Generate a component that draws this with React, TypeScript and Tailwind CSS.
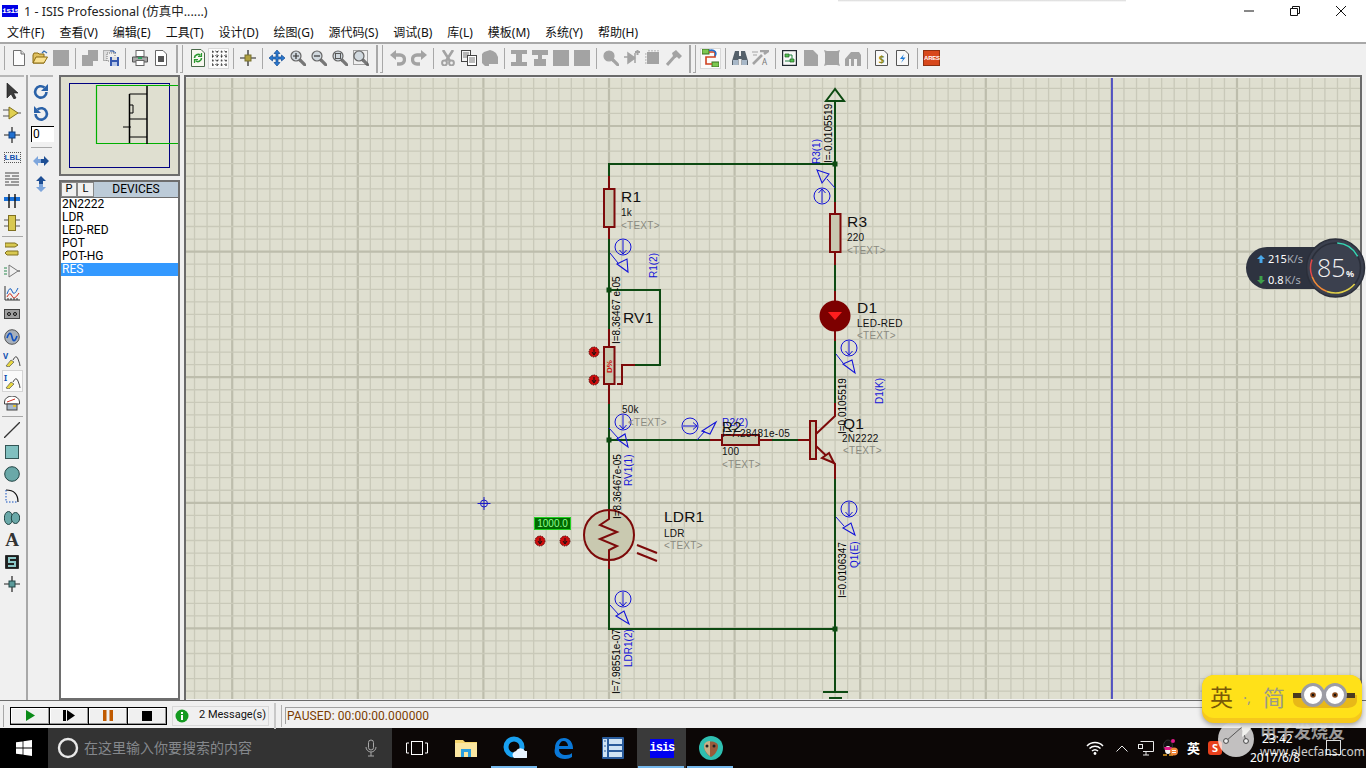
import React from "react";

type P = { children?: React.ReactNode; s?: number; w?: number; h?: number };
const Ic = ({ children, w = 16, h = 16 }: P) => (
  <svg width={w} height={h} viewBox={`0 0 ${w} ${h}`} className="block shrink-0">{children}</svg>
);
const G = "#a3a3a3";

const DocBase = ({ fill = "#fff", stroke = "#555" }: { fill?: string; stroke?: string }) => (
  <path d="M2.5 .5H10L13.5 4V15.5H2.5Z" fill={fill} stroke={stroke} />
);
const NewDoc = () => <Ic><DocBase fill="#fcfcfc" stroke="#707070" /><path d="M10 .5V4H13.5" fill="#ddd" stroke="#707070" /></Ic>;
const Folder = () => (
  <Ic>
    <path d="M1 5 2 3H6L7 4H12V13H1Z" fill="#e0c060" stroke="#8a6a10" />
    <path d="M1 13 4 7H15.5L12 13Z" fill="#f8e090" stroke="#8a6a10" />
    <path d="M10 3 12 1 15 3" fill="none" stroke="#3a70b0" strokeWidth="1.3" />
  </Ic>
);
const GSq = () => <Ic><rect x="0" y="0" width="16" height="16" fill={G} /></Ic>;
const GDocs = () => <Ic><path d="M6 0H16V11H11V16H0V5H6Z" fill={G} /></Ic>;
const SaveAll = () => (
  <Ic>
    <rect x=".5" y=".5" width="10" height="10" fill="#ddd" stroke="#777" strokeDasharray="1 1" />
    <rect x="4" y="3" width="8" height="8" fill="#eee" stroke="#777" strokeDasharray="1 1" />
    <path d="M7 1 10 1 13 3" fill="none" stroke="#2a5ab0" />
    <rect x="7" y="7" width="9" height="9" fill="#3558b0" />
    <rect x="9" y="7" width="5" height="3" fill="#ddd" />
    <rect x="9" y="12" width="5" height="4" fill="#b8c8e8" />
  </Ic>
);
const Printer = () => (
  <Ic>
    <rect x="4" y=".5" width="8" height="6" fill="#fff" stroke="#666" />
    <path d="M.5 7H15.5V12H.5Z" fill="#a8a8a8" stroke="#555" />
    <rect x="4" y="10.5" width="8" height="5" fill="#fff" stroke="#666" />
    <rect x="6" y="7" width="4" height="2" fill="#30a060" />
  </Ic>
);
const DocSq = () => (
  <Ic w={12} h={16}>
    <path d="M.5 .5H8L11.5 4V15.5H.5Z" fill="#fff" stroke="#666" />
    <rect x="3" y="6" width="6" height="6" fill="#555" />
  </Ic>
);
const Refresh = () => (
  <Ic w={14} h={18}>
    <path d="M.5 .5H10L13.5 4V17.5H.5Z" fill="#f8f8f0" stroke="#4a6a4a" />
    <path d="M3.5 9a3.5 3.5 0 0 1 6-2.5M10.5 9a3.5 3.5 0 0 1-6 2.5" fill="none" stroke="#2a9a30" strokeWidth="1.6" />
    <path d="M10.5 4v3.5H7M3.5 14v-3.5H7" fill="none" stroke="#2a9a30" strokeWidth="1.2" />
  </Ic>
);
const Dots = () => (
  <Ic w={16} h={16}>
    {[0, 1, 2, 3].map((i) => [0, 1, 2, 3].map((j) => <rect key={`${i}${j}`} x={1 + i * 4.4} y={1 + j * 4.4} width="1.6" height="1.6" fill="#333" />))}
    <path d="M1 1H15M1 5.5H15M1 10H15M1 14.5H15M1.5 1V15M6 1V15M10.5 1V15M15 1V15" stroke="#555" strokeWidth=".7" strokeDasharray="1 2" />
  </Ic>
);
const Cross = () => (
  <Ic>
    <path d="M8 0V16M0 8H16" stroke="#222" strokeWidth="1.2" />
    <rect x="5" y="5" width="6" height="6" fill="#b0a040" stroke="#777030" />
  </Ic>
);
const Move = () => (
  <Ic>
    <path d="M8 0 11 3.5H9V7H12.5V5L16 8 12.5 11V9H9V12.5H11L8 16 5 12.5H7V9H3.5V11L0 8 3.5 5V7H7V3.5H5Z" fill="#2a78d0" stroke="#124a90" strokeWidth=".7" />
  </Ic>
);
const Zoom = ({ kind = "" as string, grey = false }) => (
  <Ic>
    <path d="M10 10 15 15" stroke={grey ? G : "#777"} strokeWidth="3.2" strokeLinecap="round" />
    <circle cx="6" cy="6" r="5" fill={grey ? G : "#d0d8de"} stroke={grey ? G : "#666"} strokeWidth="1.2" />
    {kind === "+" && <path d="M3 6H9M6 3V9" stroke="#333" strokeWidth="1.2" />}
    {kind === "-" && <path d="M3 6H9" stroke="#333" strokeWidth="1.2" />}
    {kind === "f" && <rect x="3.5" y="3.5" width="5" height="5" fill="none" stroke="#555" />}
    {kind === "a" && <rect x=".5" y=".5" width="14" height="14" fill="none" stroke="#555" strokeDasharray="1 1" />}
  </Ic>
);
const Undo = ({ flip = false }) => (
  <Ic>
    <g transform={flip ? "translate(16 0) scale(-1 1)" : undefined}>
      <path d="M4 5H10A4 4 0 0 1 10 14H7" fill="none" stroke={G} strokeWidth="3.4" />
      <path d="M6 0V10L0 5Z" fill={G} />
    </g>
  </Ic>
);
const Scissors = () => (
  <Ic>
    <path d="M3 0 10 11M13 0 6 11" stroke={G} strokeWidth="2.6" />
    <circle cx="4.5" cy="13" r="2.4" fill="none" stroke={G} strokeWidth="2" />
    <circle cx="11.5" cy="13" r="2.4" fill="none" stroke={G} strokeWidth="2" />
  </Ic>
);
const Copy = () => (
  <Ic>
    <rect x=".5" y=".5" width="9" height="11" fill="#f4f4f4" stroke="#444" />
    <path d="M2 3H8M2 5H8M2 7H8" stroke="#777" />
    <rect x="6.5" y="5.5" width="9" height="10" fill="#fff" stroke="#444" />
    <path d="M8 8H14M8 10H14M8 12H14" stroke="#777" />
  </Ic>
);
const Paste = () => <Ic><path d="M5 1 8 0 11 1 14 3 16 7V14H7V16H3L0 13V4L2 2Z" fill={G} /></Ic>;
const AlignA = () => <Ic><path d="M0 0H16V4H11V12H16V16H0V12H5V4H0Z" fill={G} /></Ic>;
const AlignB = () => <Ic><path d="M0 0H16V5H10V9H14V16H2V9H6V5H0Z" fill={G} /></Ic>;
const Diode = () => <Ic><path d="M0 7H4M4 3 11 8 4 13ZM11 3V13" fill={G} stroke={G} strokeWidth="1.5" /><path d="M11 2H16M13.5 0V5" stroke={G} strokeWidth="2" /></Ic>;
const Chip = () => <Ic><rect x="2" y="2" width="12" height="12" fill={G} /><path d="M0 4H16M0 7H16M0 10H16M0 13H16M4 0V16M7 0V16M10 0V16M13 0V16" stroke={G} strokeDasharray="1.5 11" /></Ic>;
const Hammer = () => <Ic><path d="M1 15 9 6" stroke={G} strokeWidth="3" /><path d="M6 3 10 0 16 6 13 9 11 7 9 8 7 6Z" fill={G} /></Ic>;
const LinkIc = () => (
  <Ic w={17} h={18}>
    <rect x="0" y="0" width="7" height="5" fill="#7cc850" stroke="#3a7020" />
    <rect x="10" y="13" width="7" height="5" fill="#7cc850" stroke="#3a7020" />
    <path d="M7 3H13V8H4V15H10" fill="none" stroke="#d04020" strokeWidth="1.6" />
    <path d="M7 1.5C13 0 15 4 13 7" fill="none" stroke="#2070d0" strokeWidth="1.6" />
  </Ic>
);
const Binoc = () => (
  <Ic>
    <path d="M3 1H7V6H9V1H13L16 11V15H9.5V9H6.5V15H0V11Z" fill="#55606a" />
    <rect x="1" y="10" width="5" height="5" fill="#a8b8c8" />
    <rect x="10" y="10" width="5" height="5" fill="#a8b8c8" />
  </Ic>
);
const Tools = () => (
  <Ic w={17} h={16}>
    <path d="M1 14 10 5M8 1 16 1 12 4" stroke={G} strokeWidth="2.6" fill="none" />
    <path d="M0 2H6M1 5H5" stroke={G} strokeWidth="1.2" />
    <text x="10" y="15" fontSize="8" fill="#777">A</text>
  </Ic>
);
const DocGreen = () => (
  <Ic w={15} h={16}>
    <rect x=".5" y=".5" width="14" height="15" fill="#f8f8f8" stroke="#202830" strokeWidth="1.4" />
    <path d="M3 4H7V7H3ZM8 9H12V12H8Z" fill="#50c050" stroke="#206020" strokeWidth=".7" />
    <path d="M7 5H10V9M3 11H8" stroke="#208040" fill="none" />
  </Ic>
);
const GDoc = () => <Ic w={14} h={16}><path d="M0 0H9L14 5V16H0Z" fill={G} /></Ic>;
const GX = () => <Ic><path d="M0 0 3 1H13L16 0 15 3V13L16 16 13 15H3L0 16 1 13V3Z" fill={G} /></Ic>;
const GArc = () => <Ic><path d="M0 16V9L6 2H14L16 5V16H12V9H9V16H6V9H4V16Z" fill={G} /></Ic>;
const DocSym = ({ sym, color }: { sym: string; color: string }) => (
  <Ic w={13} h={16}>
    <path d="M.5 .5H9L12.5 4V15.5H.5Z" fill="#f8f8f8" stroke="#555" />
    <text x="6.5" y="12.5" textAnchor="middle" fontSize="10" fontWeight="700" fill={color}>{sym}</text>
  </Ic>
);
const Bolt = () => (
  <Ic w={13} h={16}>
    <path d="M.5 .5H9L12.5 4V15.5H.5Z" fill="#f8f8f8" stroke="#555" />
    <path d="M8 4 4 9H7L5 13 9.5 7.5H6.5Z" fill="#1878d8" />
  </Ic>
);
const Ares = () => (
  <div className="w-[17px] h-[16px] bg-[#d8481c] border border-[#903010] text-white text-[6px] leading-[14px] font-bold text-center whitespace-nowrap tracking-[-0.2px] font-['Liberation_Sans',sans-serif]">ARES</div>
);

const Cell = ({ children, on }: { children?: React.ReactNode; on?: boolean }) => (
  <div className={on ? "w-[21px] h-[21px] flex items-center justify-center bg-[#fbfbfb] border border-[#d8d8d8]" : "w-[21px] h-[21px] flex items-center justify-center"}>{children}</div>
);
const Sep = () => (
  <div className="w-[8px] h-[21px] flex justify-center"><div className="w-px h-full bg-[#a8a8a8]" /></div>
);
const Big = () => (
  <div className="w-[16px] h-[28px] flex pl-[5px] gap-[2px] translate-y-[1px]">
    <div className="w-[2px] h-full bg-[#a8a8a8]" />
    <div className="w-[3px] h-full border-r border-b border-[#a8a8a8]" />
  </div>
);

const LeftCell = ({ children, on }: { children?: React.ReactNode; on?: boolean }) => (
  <div className={on ? "w-[21px] h-[22px] flex items-center justify-center bg-[#fafafa] border border-[#d4d4d4]" : "w-[21px] h-[22px] flex items-center justify-center"}>{children}</div>
);

const Pen = () => (
  <g>
    <path d="M3 15 8 9 11 11 6 16Z" fill="#e8d840" stroke="#555" strokeWidth=".7" />
    <path d="M10 9Q13 3 15 8T17 15" fill="none" stroke="#333" strokeWidth=".9" />
  </g>
);

const leftTop = [
  <Ic key="a"><path d="M3 0V15L7 11 10 16 12 15 9.5 10H14Z" fill="#3c3c3c" stroke="#111" strokeWidth=".6" /></Ic>,
  <Ic key="b" w={18} h={14}><path d="M6 1 15 7 6 13Z" fill="#e0d050" stroke="#807020" /><path d="M0 4H6M0 10H6M15 7H18" stroke="#555" /></Ic>,
  <Ic key="c"><path d="M8 0V16M0 8H16" stroke="#222" strokeWidth="1.2" /><rect x="5" y="5" width="6" height="6" fill="#2070d0" stroke="#104080" /></Ic>,
  <div key="d" className="w-[17px] h-[11px] border border-dotted border-[#555] text-[#1050b0] text-[8px] leading-[9px] font-bold text-center font-['Liberation_Sans',sans-serif]">LBL</div>,
  <Ic key="e"><path d="M1 2H15M1 5H6M8 5H15M1 8H15M1 11H5M7 11H15M1 14H15" stroke="#444" /></Ic>,
  <Ic key="f" w={16} h={14}><path d="M0 5H16" stroke="#1870d8" strokeWidth="4" /><path d="M5 0V14M11 0V14" stroke="#111" strokeWidth="1.4" /></Ic>,
  <Ic key="g" w={16} h={16}><rect x="4.5" y=".5" width="7" height="15" fill="#d8c850" stroke="#807020" /><path d="M0 5H4M0 11H4M12 5H16M12 11H16" stroke="#555" /></Ic>,
];
const leftMid = [
  <Ic key="a" w={14} h={14}><path d="M0 1H10L13 3 10 5H0ZM2 9H13V13H2L0 11Z" fill="#d8c850" stroke="#807020" /></Ic>,
  <Ic key="b" w={16} h={14}><path d="M5 1V13L14 7Z" fill="#f0f0f0" stroke="#777" /><path d="M0 4H3M0 7H3M0 10H3" stroke="#2a8a50" /><path d="M14 7H16" stroke="#333" /></Ic>,
  <Ic key="c" w={16} h={16}><path d="M1 1V15H16" stroke="#333" fill="none" /><path d="M3 9Q6 0 8 6T14 3" fill="none" stroke="#1860c0" /><path d="M3 12Q6 6 8 11T15 8" fill="none" stroke="#d03020" /><path d="M4 15V13M7 15V13M10 15V13M13 15V13" stroke="#333" /></Ic>,
  <Ic key="d" w={16} h={12}><rect x=".5" y=".5" width="15" height="9" fill="#a0a0a0" stroke="#444" /><circle cx="5" cy="5" r="1.5" fill="none" stroke="#111" /><circle cx="11" cy="5" r="1.5" fill="none" stroke="#111" /></Ic>,
  <Ic key="e"><circle cx="8" cy="8" r="7.3" fill="#a8b0ba" stroke="#555" /><path d="M3 9C5 3 7 3 8 8S11 13 13 7" fill="none" stroke="#1050c0" strokeWidth="1.6" /></Ic>,
  <Ic key="f" w={18} h={16}><text x="0" y="8" fontSize="8" fontWeight="700" fill="#1050b0">V</text><Pen /></Ic>,
  <Ic key="g" w={18} h={16}><text x="1" y="8" fontSize="8" fontWeight="700" fill="#1050b0">I</text><Pen /></Ic>,
  <Ic key="h" w={16} h={15}><path d="M.5 6A7.5 6 0 0 1 15.5 6V8H.5Z" fill="#fff" stroke="#444" /><path d="M3 6 11 3" stroke="#d03020" /><rect x="3" y="8" width="10" height="6" fill="#a8b8c8" stroke="#444" /><rect x="9" y="9" width="3" height="2" fill="#e0c030" /></Ic>,
];
const Teal = "#6aa8a8";
const leftBot = [
  <Ic key="a"><path d="M0 16 16 0" stroke="#333" strokeWidth="1.3" /></Ic>,
  <Ic key="b" w={14} h={14}><rect x=".5" y=".5" width="13" height="13" fill="#80c0c0" stroke="#355" /></Ic>,
  <Ic key="c"><circle cx="8" cy="8" r="7.3" fill={Teal} stroke="#244" /></Ic>,
  <Ic key="d" w={14} h={14}><path d="M1 1Q13 1 13 13" fill="none" stroke="#111" strokeWidth="1.2" /><path d="M1 1V13H13" fill="none" stroke="#1050c0" strokeDasharray="1.5 1.5" /></Ic>,
  <Ic key="e" w={16} h={14}><ellipse cx="4.5" cy="7" rx="4.2" ry="6.5" fill={Teal} stroke="#244" /><ellipse cx="11.5" cy="7" rx="4.2" ry="5.5" fill={Teal} stroke="#244" /></Ic>,
  <div key="f" className="text-[19px] leading-[20px] font-bold font-['Liberation_Serif',serif] text-[#333]">A</div>,
  <Ic key="g" w={14} h={14}><rect x=".7" y=".7" width="12.6" height="12.6" fill="#222" stroke="#111" /><path d="M11 3H4V7H10V11H3" fill="none" stroke="#8cc8c8" strokeWidth="2" /></Ic>,
  <Ic key="h" w={16} h={16}><path d="M8 0V16M0 8H16" stroke="#222" strokeWidth="1.2" /><rect x="5" y="5" width="6" height="6" fill="#5a9a9a" stroke="#244" /></Ic>,
];

/* schematic helpers */
const GW = "#0d4a12";
const RW = "#7d0a0a";
const Body = "#c9c9b0";
const W = ({ d, c = GW, sw = 2 }: { d: string; c?: string; sw?: number }) => <path d={d} fill="none" stroke={c} strokeWidth={sw} />;
const J = ({ x, y }: { x: number; y: number }) => <rect x={x - 2.5} y={y - 2.5} width="5" height="5" fill={GW} />;
const VT = ({ x, y, c = "#000", t }: { x: number; y: number; c?: string; t: string }) => (
  <text transform={`translate(${x + 3.5} ${y}) rotate(-90)`} fontSize="10" fill={c}>{t}</text>
);
const T = ({ x, y, t, s = 10, c = "#111" }: { x: number; y: number; t: string; s?: number; c?: string }) => (
  <text x={x} y={y - 1} fontSize={s} fill={c} fontWeight={400} letterSpacing={s < 11 ? 0.25 : 0.2}>{t}</text>
);
const Tx = ({ x, y }: { x: number; y: number }) => <T x={x} y={y} t="<TEXT>" c="#8a8a80" />;
const BL = "#1414d8";
const Probe = ({ cx, cy, rot, line, tri }: { cx: number; cy: number; rot: number; line: string; tri: string }) => (
  <g>
    <circle cx={cx} cy={cy} r="8" fill="none" stroke={BL} />
    <g transform={`translate(${cx} ${cy}) rotate(${rot})`}>
      <path d="M0 -7V7M-3.5 3 0 7 3.5 3" fill="none" stroke={BL} />
    </g>
    <path d={line} stroke={BL} fill="none" />
    <polygon points={tri} fill="none" stroke={BL} strokeWidth="1.1" />
  </g>
);
const Pin = ({ x, y }: { x: number; y: number }) => (
  <g>
    <circle cx={x} cy={y} r="5" fill="#cc0c0c" stroke="#5a0808" strokeDasharray="1.5 1" />
    <path d={`M${x} ${y - 3}V${y + 2}M${x - 2} ${y}L${x} ${y + 3}L${x + 2} ${y}`} stroke="#111" fill="none" />
  </g>
);

const Schematic = () => {
  const xs: number[] = [];
  for (let i = -34; i < 62; i++) xs.push(i);
  const ys: number[] = [];
  for (let i = -4; i < 46; i++) ys.push(i);
  return (
    <svg className="block w-full h-full font-['Liberation_Sans',sans-serif]" viewBox="186 77 1174 621">
      <rect x="186" y="77" width="1174" height="621" fill="#dfdfd0" />
      {xs.map((i) => {
        const x = 609 + i * 12.56;
        const m = i % 10 === 0;
        return <line key={i} x1={x} x2={x} y1="77" y2="698" stroke={m ? "#bdbdac" : "#c9c9b9"} strokeWidth={m ? 2.2 : 1.3} />;
      })}
      {ys.map((i) => {
        const y = 125 + i * 12.56;
        const m = i % 10 === 0;
        return <line key={i} y1={y} y2={y} x1="186" x2="1360" stroke={m ? "#bdbdac" : "#c9c9b9"} strokeWidth={m ? 2.2 : 1.3} />;
      })}
      <line x1="1112" x2="1112" y1="77" y2="698" stroke="#1a1ac8" strokeWidth="1.3" />
      <path d="M484 496V509M477.5 502.5H490.5" stroke="#1a1ac8" />
      <circle cx="484" cy="502.5" r="3.5" fill="none" stroke="#1a1ac8" />

      {/* wires */}
      <W d="M835 100V201" />
      <path d="M835 88 826 100H844Z" fill="none" stroke={GW} strokeWidth="2" />
      <W d="M835 163H609V175" />
      <W d="M609 175V188" c={RW} />
      <W d="M609 226V238" c={RW} />
      <W d="M609 238V328" />
      <W d="M609 289H660V364H635" />
      <W d="M635 364H622V383H617" c={RW} />
      <W d="M609 328V346M609 383V403" c={RW} />
      <W d="M609 403V509" />
      <W d="M609 439H710" />
      <W d="M710 439H722M759 439H772" c={RW} />
      <W d="M772 439H798" />
      <W d="M798 439H810" c={RW} />
      <W d="M835 201V213M835 251V264" c={RW} />
      <W d="M835 264V290" />
      <W d="M835 290V300M835 330V340" c={RW} />
      <W d="M835 340V402" />
      <W d="M835 402V415L816 433M816 445L835 463V478" c={RW} />
      <path d="M829 452 822 457 834 462Z" fill={Body} stroke={RW} strokeWidth="2" />
      <W d="M835 478V691" />
      <W d="M823 691H848M829 697H842" />
      <W d="M609 559V568" c={RW} />
      <W d="M609 568V628H835" />
      <J x={835} y={163} /><J x={609} y={289} /><J x={609} y={439} /><J x={835} y={628} />

      {/* parts */}
      <rect x="604" y="188" width="10.5" height="38" fill={Body} stroke={RW} strokeWidth="2" />
      <rect x="830" y="213" width="10.5" height="38" fill={Body} stroke={RW} strokeWidth="2" />
      <rect x="604" y="346" width="10.5" height="37" fill={Body} stroke={RW} strokeWidth="2" />
      <text transform="translate(612 372) rotate(-90)" fontSize="8" fontWeight="700" fill="#d01010">D%</text>
      <rect x="722" y="434" width="37" height="10" fill={Body} stroke={RW} strokeWidth="2" />
      <rect x="810" y="420" width="6" height="38" fill={Body} stroke={RW} strokeWidth="2" />
      <circle cx="835" cy="315" r="15.5" fill="#7d0000" />
      <path d="M828 311H842L835 319Z" fill="#ff1e1e" />
      <circle cx="609" cy="534" r="25" fill={Body} stroke={RW} strokeWidth="2" />
      <path d="M609 509V518L600 524 617 531 600 538 617 545 609 549V559" fill="none" stroke={RW} strokeWidth="2" />
      <path d="M637 544 657 552M637 552 657 560" stroke={RW} strokeWidth="2" />

      {/* probes */}
      <Probe cx={822} cy={195} rot={180} line="M835 187 827 178" tri="817,169 829,173 822,182" />
      <Probe cx={623} cy={246} rot={0} line="M610 252 618 262" tri="617,263 627,258 628,271" />
      <Probe cx={849} cy={347} rot={0} line="M836 353 843 362" tri="843,363 852,359 855,372" />
      <Probe cx={623} cy={421} rot={0} line="M609 427 618 437" tri="617,438 625,433 628,446" />
      <Probe cx={690} cy={425} rot={-90} line="M697 439 705 430" tri="702,430 716,421 710,433" />
      <Probe cx={849} cy={508} rot={0} line="M836 516 844 525" tri="843,527 851,522 855,534" />
      <Probe cx={623} cy={598} rot={0} line="M610 604 619 614" tri="616,615 624,610 629,623" />

      {/* labels */}
      <VT x={816} y={163} c={BL} t="R3(1)" />
      <VT x={653} y={277} c={BL} t="R1(2)" />
      <VT x={879} y={403} c={BL} t="D1(K)" />
      <VT x={628} y={485} c={BL} t="RV1(1)" />
      <VT x={854} y={567} c={BL} t="Q1(E)" />
      <VT x={628} y={666} c={BL} t="LDR1(2)" />
      <VT x={828} y={162} t="I=-0.0105519" />
      <VT x={616} y={343} t="I=8.36467 e-05" />
      <VT x={842} y={433} t="I=0.0105519" />
      <VT x={617} y={518} t="I=8.36467e-05" />
      <VT x={842} y={597} t="I=0.0106347" />
      <VT x={616} y={693} t="I=7.98551e-07" />
      <T x={722} y={426} t="R2(2)" c={BL} />
      <T x={722} y={432} t="R2" s={15} />
      <T x={722} y={437} t="I=7.28481e-05" />

      <T x={621} y={202} t="R1" s={15.5} />
      <T x={621} y={216} t="1k" />
      <Tx x={621} y={229} />
      <T x={847} y={227} t="R3" s={15.5} />
      <T x={847} y={241} t="220" />
      <Tx x={847} y={254} />
      <T x={857} y={313} t="D1" s={15.5} />
      <T x={857} y={327} t="LED-RED" />
      <Tx x={857} y={339} />
      <T x={623} y={323} t="RV1" s={15.5} />
      <T x={622} y={413} t="50k" />
      <Tx x={628} y={426} />
      <T x={722} y={455} t="100" />
      <Tx x={722} y={468} />
      <T x={843} y={429} t="Q1" s={15.5} />
      <T x={842} y={442} t="2N2222" />
      <Tx x={843} y={454} />
      <T x={664} y={522} t="LDR1" s={15.5} />
      <T x={664} y={537} t="LDR" />
      <Tx x={664} y={549} />

      <Pin x={594} y={351} /><Pin x={594} y={379} /><Pin x={540} y={540} /><Pin x={565} y={540} />
      <rect x="534.5" y="516.5" width="36" height="12" fill="#006a00" stroke="#20d020" />
      <text x="552.5" y="526" textAnchor="middle" fontSize="10" fill="#90ff90">1000.0</text>
    </svg>
  );
};

const polar = (cx: number, cy: number, r: number, a: number) => {
  const t = ((a - 90) * Math.PI) / 180;
  return `${(cx + r * Math.cos(t)).toFixed(2)} ${(cy + r * Math.sin(t)).toFixed(2)}`;
};
const arc = (cx: number, cy: number, r: number, a0: number, a1: number) =>
  `M${polar(cx, cy, r, a0)}A${r} ${r} 0 ${a1 - a0 > 180 ? 1 : 0} 1 ${polar(cx, cy, r, a1)}`;

const SpeedWidget = () => (
  <div className="absolute left-[1246px] top-[238px] w-[120px] h-[60px]">
    <div className="absolute left-0 top-[9px] w-[74px] h-[42px] rounded-l-[21px] bg-[#2e3340] text-[11px] leading-[14px] text-white">
      <div className="flex items-center mt-[4px] pl-[11px] pt-[1px]">
        <svg width="8" height="8" viewBox="0 0 8 8" className="mr-[3px]"><path d="M4 0 8 4H5.5V8H2.5V4H0Z" fill="#4aa8e8" /></svg>
        <span>215</span><span className="text-[#a8aeb8]">K/s</span>
      </div>
      <div className="flex items-center mt-[7px] pl-[11px]">
        <svg width="8" height="8" viewBox="0 0 8 8" className="mr-[3px]"><path d="M4 8 8 4H5.5V0H2.5V4H0Z" fill="#3ea04a" /></svg>
        <span>0.8</span><span className="text-[#a8aeb8] ml-[1px]">K/s</span>
      </div>
    </div>
    <svg width="60" height="60" viewBox="0 0 60 60" className="absolute left-[60px] top-0">
      <circle cx="29.5" cy="30" r="29" fill="#3b404e" stroke="#2b2f3a" strokeWidth="1.5" />
      <circle cx="29.5" cy="30" r="25" fill="none" stroke="#2b2f3a" strokeWidth="1.6" />
      <path d={arc(29.5, 30, 25, 4, 62)} fill="none" stroke="#37d6b4" strokeWidth="1.6" />
      <path d={arc(29.5, 30, 25, 130, 200)} fill="none" stroke="#e0cf4a" strokeWidth="1.6" />
      <path d={arc(29.5, 30, 25, 200, 250)} fill="none" stroke="#ee8a3a" strokeWidth="1.6" />
      <path d={arc(29.5, 30, 25, 250, 290)} fill="none" stroke="#e04a4a" strokeWidth="1.6" />
      <text x="11" y="39" fontSize="25" fill="#f2f2f2" fontFamily="Open Sans, sans-serif" fontWeight="300">85</text>
      <text x="40" y="39" fontSize="9" fill="#f2f2f2" fontWeight="700">%</text>
    </svg>
  </div>
);

const Ime = () => (
  <div className="absolute left-[1202px] top-[675px] w-[160px] h-[60px]">
    <svg width="24" height="20" viewBox="0 0 24 20" className="absolute left-[30px] top-[44px]"><path d="M4 0H22Q20 12 10 18 12 8 4 0Z" fill="#f1f1ee" /></svg>
    <div className="absolute left-0 top-0 w-[160px] h-[48px] rounded-[12px] bg-[#f6c81c] shadow-[0_2px_5px_rgba(0,0,0,0.35)]" />
    <div className="absolute left-0 top-0 w-[160px] h-[43px] rounded-[12px] bg-[#ffe119] flex items-center">
      <span className="ml-[8px] text-[23px] leading-[30px] text-[#7a5a08]">英</span>
      <span className="ml-[10px] text-[15px] leading-[30px] text-[#9a9a88]">·,</span>
      <span className="ml-[12px] text-[22px] leading-[30px] text-[#9a9a88]">简</span>
    </div>
    <svg width="64" height="32" viewBox="0 0 64 32" className="absolute left-[91px] top-[7px]">
      <path d="M0 13H64V18Q64 26 52 26H12Q0 26 0 18Z" fill="#e8b818" />
      <rect x="0" y="11" width="9" height="5" fill="#4a3a20" />
      <rect x="53" y="11" width="9" height="5" fill="#4a3a20" />
      <circle cx="20" cy="13" r="10.5" fill="#fff" stroke="#9c9ca4" strokeWidth="3" />
      <circle cx="42" cy="13" r="10.5" fill="#fff" stroke="#9c9ca4" strokeWidth="3" />
      <circle cx="20" cy="13" r="2.8" fill="#8a4a1a" />
      <circle cx="42" cy="13" r="2.8" fill="#8a4a1a" />
      <circle cx="20" cy="13" r="1.2" fill="#111" />
      <circle cx="42" cy="13" r="1.2" fill="#111" />
    </svg>
  </div>
);

const Watermark = () => (
  <div className="absolute left-[1216px] top-[718px] w-[150px] h-[50px]">
    <svg width="40" height="40" viewBox="0 0 40 40" className="absolute left-0 top-[2px]">
      <circle cx="20" cy="19" r="18" fill="#ffffff" fillOpacity=".75" />
      <path d="M10 21 26 7 30 21" fill="none" stroke="#555" strokeWidth="1" />
      <circle cx="10" cy="21" r="2.4" fill="#eee" stroke="#444" />
      <circle cx="30" cy="21" r="2.4" fill="#eee" stroke="#444" />
    </svg>
    <div className="absolute left-[44px] top-[3px] text-[17px] leading-[22px] font-bold text-white/60 whitespace-nowrap">电子发烧友</div>
    <div className="absolute left-[44px] top-[27px] text-[12px] leading-[14px] text-white/80 whitespace-nowrap">www.elecfans.com</div>
  </div>
);

const menus = ["文件(F)", "查看(V)", "编辑(E)", "工具(T)", "设计(D)", "绘图(G)", "源代码(S)", "调试(B)", "库(L)", "模板(M)", "系统(Y)", "帮助(H)"];
const devices = ["2N2222", "LDR", "LED-RED", "POT", "POT-HG", "RES"];

const PlayBtn = ({ children }: { children: React.ReactNode }) => (
  <div className="w-[40px] h-[18px] flex items-center justify-center bg-[#f0f0f0] border border-black shadow-[inset_-1px_-1px_0_#999,inset_1px_1px_0_#fff] -ml-px first:ml-0">{children}</div>
);

const TaskCell = ({ children, on, line }: { children?: React.ReactNode; on?: boolean; line?: boolean }) => (
  <div className={on ? "relative w-[49px] h-full flex items-center justify-center bg-[#3a3a3a]" : "relative w-[49px] h-full flex items-center justify-center"}>
    {children}
    {line && <div className="absolute left-[1px] right-[2px] bottom-0 h-[2px] bg-[#76b9ed]" />}
  </div>
);

export default function App() {
  return (
    <div className="relative w-[1366px] h-[768px] overflow-hidden flex flex-col bg-[#f0f0f0] text-black font-['Noto_Sans','Noto_Sans_CJK_SC',sans-serif]">
      {/* title */}
      <div className="h-[22px] bg-white flex items-center shrink-0 relative">
        <div className="ml-[2px] w-[16px] h-[12px] bg-[#0000e6] text-white text-[8px] leading-[12px] text-center font-bold font-['Liberation_Mono',monospace] tracking-[-0.6px]">isis</div>
        <span className="ml-[6px] text-[12.5px] leading-[22px] pt-[1px] text-[#222] whitespace-nowrap">1 - ISIS Professional (仿真中......)</span>
        <div className="absolute left-[838px] top-0 w-[288px] h-[2px] bg-gradient-to-b from-[#d8d8d8] to-white" />
        <div className="ml-auto flex h-full items-center">
          <div className="w-[46px] flex justify-center"><svg width="10" height="10" viewBox="0 0 10 10"><path d="M0 5H10" stroke="#111" /></svg></div>
          <div className="w-[46px] flex justify-center"><svg width="10" height="10" viewBox="0 0 10 10"><path d="M2.5 2.5V.5H9.5V7.5H7.5M.5 2.5H7.5V9.5H.5Z" fill="none" stroke="#111" /></svg></div>
          <div className="w-[46px] flex justify-center mr-[2px]"><svg width="10" height="10" viewBox="0 0 10 10"><path d="M0 0 10 10M10 0 0 10" stroke="#111" /></svg></div>
        </div>
      </div>
      {/* menu */}
      <div className="h-[20px] bg-white flex items-center pl-[7px] pt-[1px] gap-[15px] text-[12px] leading-[19px] text-[#111] shrink-0 whitespace-nowrap">
        {menus.map((m) => <span key={m}>{m}</span>)}
      </div>
      <div className="h-[2px] bg-[#a8a8a8] shrink-0" />
      {/* toolbar */}
      <div className="h-[31px] flex items-center shrink-0 bg-[#f0f0f0] pb-[3px]">
        <div className="w-[8px] h-[24px] flex pl-[3px]"><div className="w-[2px] h-full border-r border-[#a8a8a8]" /></div>
        <Cell><NewDoc /></Cell><Cell><Folder /></Cell><Cell><GSq /></Cell><Sep />
        <Cell><GDocs /></Cell><Cell><SaveAll /></Cell><Sep />
        <Cell><Printer /></Cell><Cell><DocSq /></Cell><Big />
        <Cell><Refresh /></Cell><Cell on><Dots /></Cell><Sep />
        <Cell><Cross /></Cell><Sep />
        <Cell><Move /></Cell><Cell><Zoom kind="+" /></Cell><Cell><Zoom kind="-" /></Cell><Cell><Zoom kind="f" /></Cell><Cell><Zoom kind="a" /></Cell><Big />
        <Cell><Undo /></Cell><Cell><Undo flip /></Cell><Sep />
        <Cell><Scissors /></Cell><Cell><Copy /></Cell><Cell><Paste /></Cell><Sep />
        <Cell><AlignA /></Cell><Cell><AlignB /></Cell><Cell><GSq /></Cell><Cell><GSq /></Cell><Sep />
        <Cell><Zoom grey /></Cell><Cell><Diode /></Cell><Cell><Chip /></Cell><Cell><Hammer /></Cell><Big />
        <Cell on><LinkIc /></Cell><Sep />
        <Cell><Binoc /></Cell><Cell><Tools /></Cell><Sep />
        <Cell><DocGreen /></Cell><Cell><GDoc /></Cell><Cell><GX /></Cell><Cell><GArc /></Cell><Sep />
        <Cell><DocSym sym="$" color="#8a8a20" /></Cell><Cell><Bolt /></Cell><Sep />
        <Cell><Ares /></Cell>
      </div>
      {/* main */}
      <div className="flex-1 min-h-0 flex">
        <div className="w-[28px] shrink-0 flex flex-col items-center border-r-2 border-[#a8a8a8] pr-[2px]">
          <div className="w-[24px] h-[2px] bg-[#b8b8b8] mb-[3px] shrink-0" />
          {leftTop.map((x, i) => <LeftCell key={i}>{x}</LeftCell>)}
          <div className="w-[21px] h-[1px] bg-[#a8a8a8] mt-[2px] mb-[1px]" />
          {leftMid.map((x, i) => <LeftCell key={i} on={i === 6}>{x}</LeftCell>)}
          <div className="w-[21px] h-[1px] bg-[#a8a8a8] my-[2px]" />
          {leftBot.map((x, i) => <LeftCell key={i}>{x}</LeftCell>)}
        </div>
        <div className="w-[31px] shrink-0 flex flex-col items-center pr-[5px]">
          <div className="w-[23px] h-[2px] bg-[#b8b8b8] mb-[4px] shrink-0" />
          <div className="h-[22px] flex items-center">
            <svg width="16" height="16" viewBox="0 0 16 16"><path d="M13.5 8A5.7 5.7 0 1 1 11.5 3.6" fill="none" stroke="#2b62a8" strokeWidth="2.6" /><path d="M15 0V7H8Z" fill="#2b62a8" /></svg>
          </div>
          <div className="h-[22px] flex items-center">
            <svg width="16" height="16" viewBox="0 0 16 16"><path d="M2.5 8A5.7 5.7 0 1 0 4.5 3.6" fill="none" stroke="#2b62a8" strokeWidth="2.6" /><path d="M1 0V7H8Z" fill="#2b62a8" /></svg>
          </div>
          <div className="w-[23px] h-[16px] mt-[1px] bg-white border-l border-t border-black text-[12px] leading-[14px] pl-[1px] self-start ml-[3px] font-['Roboto',sans-serif]">0</div>
          <div className="w-[21px] h-px bg-[#a8a8a8] mt-[5px] mb-[2px]" />
          <div className="h-[22px] flex items-center">
            <svg width="16" height="10" viewBox="0 0 16 10"><path d="M0 5 5 0V3H8V7H5V10Z" fill="#7ea6dc" /><path d="M16 5 11 0V3H8V7H11V10Z" fill="#1f4f94" /></svg>
          </div>
          <div className="h-[24px] flex items-center">
            <svg width="10" height="16" viewBox="0 0 10 16"><path d="M5 0 0 5H3V8H7V5H10Z" fill="#1f4f94" /><path d="M5 16 0 11H3V8H7V11H10Z" fill="#7ea6dc" /></svg>
          </div>
        </div>
        <div className="w-[121px] shrink-0 flex flex-col">
          <div className="h-[101px] shrink-0 border-2 border-[#6e6e6e] bg-[#dfdfd0]">
            <svg width="117" height="97" viewBox="61 77 117 97" className="block">
              <rect x="69.5" y="83.5" width="100" height="84" fill="none" stroke="#000080" />
              <path d="M180 85.5H96.5V143.5H180" fill="none" stroke="#00b000" strokeWidth="1.2" />
              <path d="M147 86V144M129.5 94V143" stroke="#000" strokeWidth="1.5" />
              <path d="M129.5 94H147M129.5 105H133V113H129.5M129.5 119H147M123 127H131M129.5 137H147" fill="none" stroke="#000" />
            </svg>
          </div>
          <div className="h-[4px] shrink-0" />
          <div className="flex-1 min-h-0 flex flex-col border-2 border-[#6e6e6e] bg-white">
            <div className="h-[16px] shrink-0 flex bg-[#bccbd8] border-b border-[#6e6e6e]">
              <div className="w-[16px] h-full flex items-center justify-center bg-[#f0f0f0] border border-[#888] text-[11px] font-['Roboto',sans-serif]">P</div>
              <div className="w-[17px] h-full flex items-center justify-center bg-[#f0f0f0] border border-[#888] text-[11px] font-['Roboto',sans-serif]">L</div>
              <div className="flex-1 text-center text-[12px] leading-[14px] font-['Roboto',sans-serif]">DEVICES</div>
            </div>
            <div className="flex-1 text-[12px] leading-[13px] font-['Roboto',sans-serif]">
              {devices.map((d) => (
                <div key={d} className={d === "RES" ? "h-[13px] pl-[1px] bg-[#3399ff] text-white" : "h-[13px] pl-[1px]"}>{d}</div>
              ))}
            </div>
          </div>
        </div>
        <div className="ml-[4px] mr-[4px] flex-1 min-w-0 border-2 border-b-0 border-r-2 border-[#6a6a6a]">
          <Schematic />
        </div>
      </div>
      {/* status */}
      <div className="h-[28px] shrink-0 flex items-center border-t border-[#6a6a6a] bg-[#f0f0f0] relative pt-[2px]">
        <div className="w-[8px] h-[22px] flex pl-[2px]"><div className="w-[2px] h-full border-r border-[#a8a8a8]" /></div>
        <div className="ml-[2px] flex">
          <PlayBtn><svg width="9" height="11" viewBox="0 0 9 11"><path d="M0 0 9 5.5 0 11Z" fill="#0a8a18" /></svg></PlayBtn>
          <PlayBtn><svg width="12" height="11" viewBox="0 0 12 11"><path d="M0 0H3V11H0ZM4 0 12 5.5 4 11Z" fill="#000" /></svg></PlayBtn>
          <PlayBtn><svg width="10" height="11" viewBox="0 0 10 11"><path d="M0 0H3.5V11H0ZM6.5 0H10V11H6.5Z" fill="#c05a00" /></svg></PlayBtn>
          <PlayBtn><svg width="10" height="10" viewBox="0 0 10 10"><rect width="10" height="10" fill="#000" /></svg></PlayBtn>
        </div>
        <div className="ml-[5px] w-[97px] h-[20px] flex items-center border border-[#d8d8d8]">
          <svg width="14" height="14" viewBox="0 0 14 14" className="ml-[2px]"><circle cx="7" cy="7" r="6.5" fill="#149a20" /><rect x="6" y="6" width="2" height="5" fill="#fff" /><rect x="6" y="3" width="2" height="2" fill="#fff" /></svg>
          <span className="ml-[10px] text-[11px] text-[#111] whitespace-nowrap font-['Roboto',sans-serif]">2 Message(s)</span>
        </div>
        <div className="ml-[5px] w-[2px] h-[26px] bg-[#c8c8c8]" />
        <div className="ml-[5px] w-[3px] h-[22px] border-l border-[#b0b0b0]" />
        <div className="ml-[1px] w-[1060px] h-[17px] border-l border-t border-[#a0a0a0] text-[#7a3c00] text-[12px] leading-[16px] pl-[1px] font-['Roboto',sans-serif] tracking-[0.1px]">PAUSED: 00:00:00.000000</div>
      </div>
      {/* taskbar */}
      <div className="h-[40px] shrink-0 flex bg-[#0c0706] text-white">
        <div className="w-[48px] h-full flex items-center justify-center bg-black">
          <svg width="16" height="16" viewBox="0 0 16 16"><path d="M0 2.3 6.6 1.4V7.6H0ZM7.4 1.3 16 0V7.6H7.4ZM0 8.4H6.6V14.6L0 13.7ZM7.4 8.4H16V16L7.4 14.7Z" fill="#fff" /></svg>
        </div>
        <div className="w-[344px] h-full bg-[#333333] flex items-center">
          <svg width="22" height="22" viewBox="0 0 22 22" className="ml-[9px]"><circle cx="11" cy="11" r="9" fill="none" stroke="#e8e8e8" strokeWidth="2.4" /></svg>
          <span className="ml-[5px] text-[14px] leading-[20px] text-[#85888c] whitespace-nowrap">在这里输入你要搜索的内容</span>
          <svg width="12" height="18" viewBox="0 0 12 18" className="ml-auto mr-[15px]"><rect x="3.5" y="1" width="5" height="10" rx="2.5" fill="none" stroke="#a8a8a8" /><path d="M1 8A5 5 0 0 0 11 8M6 13V17M3 17H9" fill="none" stroke="#a8a8a8" /></svg>
        </div>
        <TaskCell>
          <svg width="22" height="14" viewBox="0 0 22 14"><rect x="5.5" y=".5" width="11" height="13" fill="none" stroke="#fff" /><path d="M3 2H.5V12H3M19 2H21.5V12H19" fill="none" stroke="#fff" /></svg>
        </TaskCell>
        <TaskCell>
          <svg width="22" height="18" viewBox="0 0 22 18"><path d="M0 1H8L10 3H22V18H0Z" fill="#f6d66e" /><path d="M0 4H22V18H0Z" fill="#fbe7a1" /><rect x="6" y="10" width="10" height="8" fill="#2aa0e0" /><rect x="9" y="13" width="4" height="5" fill="#fbe7a1" /></svg>
        </TaskCell>
        <TaskCell line>
          <svg width="24" height="24" viewBox="0 0 24 24"><circle cx="11" cy="11" r="8" fill="none" stroke="#18a0f0" strokeWidth="5" /><path d="M11 22A4 4 0 0 1 13 15 5 5 0 0 1 22 15 3.5 3.5 0 0 1 23 22Z" fill="#e8f4ff" /></svg>
        </TaskCell>
        <TaskCell>
          <svg width="21" height="22" viewBox="0 0 21 22"><path d="M2 11C2 4 7 1 11 1 17 1 20 6 20 12H6C6 16 9 18 13 18 16 18 18 17 19 16V20C17 21 15 22 12 22 5 22 0 18 2 11ZM6 9H15C15 6 13 4 10.5 4 8 4 6.5 6 6 9Z" fill="#0a78d8" /></svg>
        </TaskCell>
        <TaskCell>
          <svg width="22" height="22" viewBox="0 0 22 22"><rect width="22" height="22" rx="1" fill="#2a5c9c" /><path d="M1 2H5V20H1ZM7 2H20V7H7ZM7 9H20V13H7ZM7 15H20V20H7Z" fill="#d0e4f4" /><path d="M2 4H4M2 9H4M2 14H4" stroke="#2a5c9c" /></svg>
        </TaskCell>
        <TaskCell on line>
          <div className="w-[24px] h-[19px] bg-[#0000f0] text-white text-[12px] leading-[19px] text-center font-bold font-['Liberation_Mono',monospace] tracking-[-1px]">isis</div>
        </TaskCell>
        <TaskCell line>
          <svg width="24" height="24" viewBox="0 0 24 24"><circle cx="12" cy="12" r="12" fill="#2fbfb0" /><path d="M5 10C5 4 19 4 19 10 19 16 14 20 12 21 10 20 5 16 5 10Z" fill="#9a5a3a" /><path d="M5 10C5 6 9 5 11 5V20C8 18 5 14 5 10Z" fill="#c8b088" /><circle cx="8" cy="10" r="1.5" fill="#222" /><circle cx="15" cy="10" r="1.5" fill="#222" /></svg>
        </TaskCell>
        <div className="flex-1" />
        <div className="flex items-center h-full">
          <div className="w-[28px] flex justify-center">
            <svg width="18" height="14" viewBox="0 0 18 14"><path d="M1 5A11 11 0 0 1 17 5M3.5 7.5A8 8 0 0 1 14.5 7.5M6 10A4.5 4.5 0 0 1 12 10" fill="none" stroke="#fff" strokeWidth="1.5" /><circle cx="9" cy="12.5" r="1.4" fill="#fff" /></svg>
          </div>
          <div className="w-[25px] flex justify-center">
            <svg width="12" height="7" viewBox="0 0 12 7"><path d="M.5 6.5 6 1 11.5 6.5" fill="none" stroke="#e8e8e8" /></svg>
          </div>
          <div className="w-[24px] flex justify-center">
            <svg width="16" height="15" viewBox="0 0 16 15"><path d="M2.5 .5H15.5V10.5H5M8 10.5V14H5M11 14H8" fill="none" stroke="#e8e8e8" /><rect x=".5" y="3.5" width="4" height="4" fill="#0c0706" stroke="#e8e8e8" /></svg>
          </div>
          <div className="w-[24px] flex justify-center">
            <svg width="16" height="18" viewBox="0 0 16 18"><ellipse cx="6" cy="7" rx="4.5" ry="6" fill="#111" stroke="#555" strokeWidth=".5" /><ellipse cx="6" cy="11" rx="3" ry="4" fill="#f4f4f4" /><path d="M2 8H10L9 11H3Z" fill="#e01a8a" /><path d="M1 16H5M7 16H11" stroke="#e8a020" strokeWidth="1.5" /><circle cx="11" cy="2" r="2" fill="#e01a8a" /><circle cx="12" cy="12.5" r="4" fill="#f0863a" /><path d="M10 11.5H14M10 13.5H14" stroke="#fff" /></svg>
          </div>
          <div className="w-[23px] text-center text-[13px] font-bold leading-[20px]">英</div>
          <div className="w-[35px] flex">
            <div className="ml-[3px] w-[14px] h-[14px] rounded-[3px] bg-[#e8401c] text-white text-[11px] leading-[14px] font-bold text-center">S</div>
          </div>
          <div className="w-[126px] h-full relative">
            <div className="absolute left-[22px] top-[4px] text-[12px] leading-[14px] whitespace-nowrap text-white">23:42</div>
            <div className="absolute left-[10px] top-[23px] text-[12px] leading-[14px] whitespace-nowrap text-white">2017/6/8</div>
            <div className="absolute left-[86px] top-[12px] w-[15px] h-[15px] border border-[#ddd]" />
          </div>
        </div>
      </div>
      <SpeedWidget />
      <Watermark />
      <Ime />
    </div>
  );
}
